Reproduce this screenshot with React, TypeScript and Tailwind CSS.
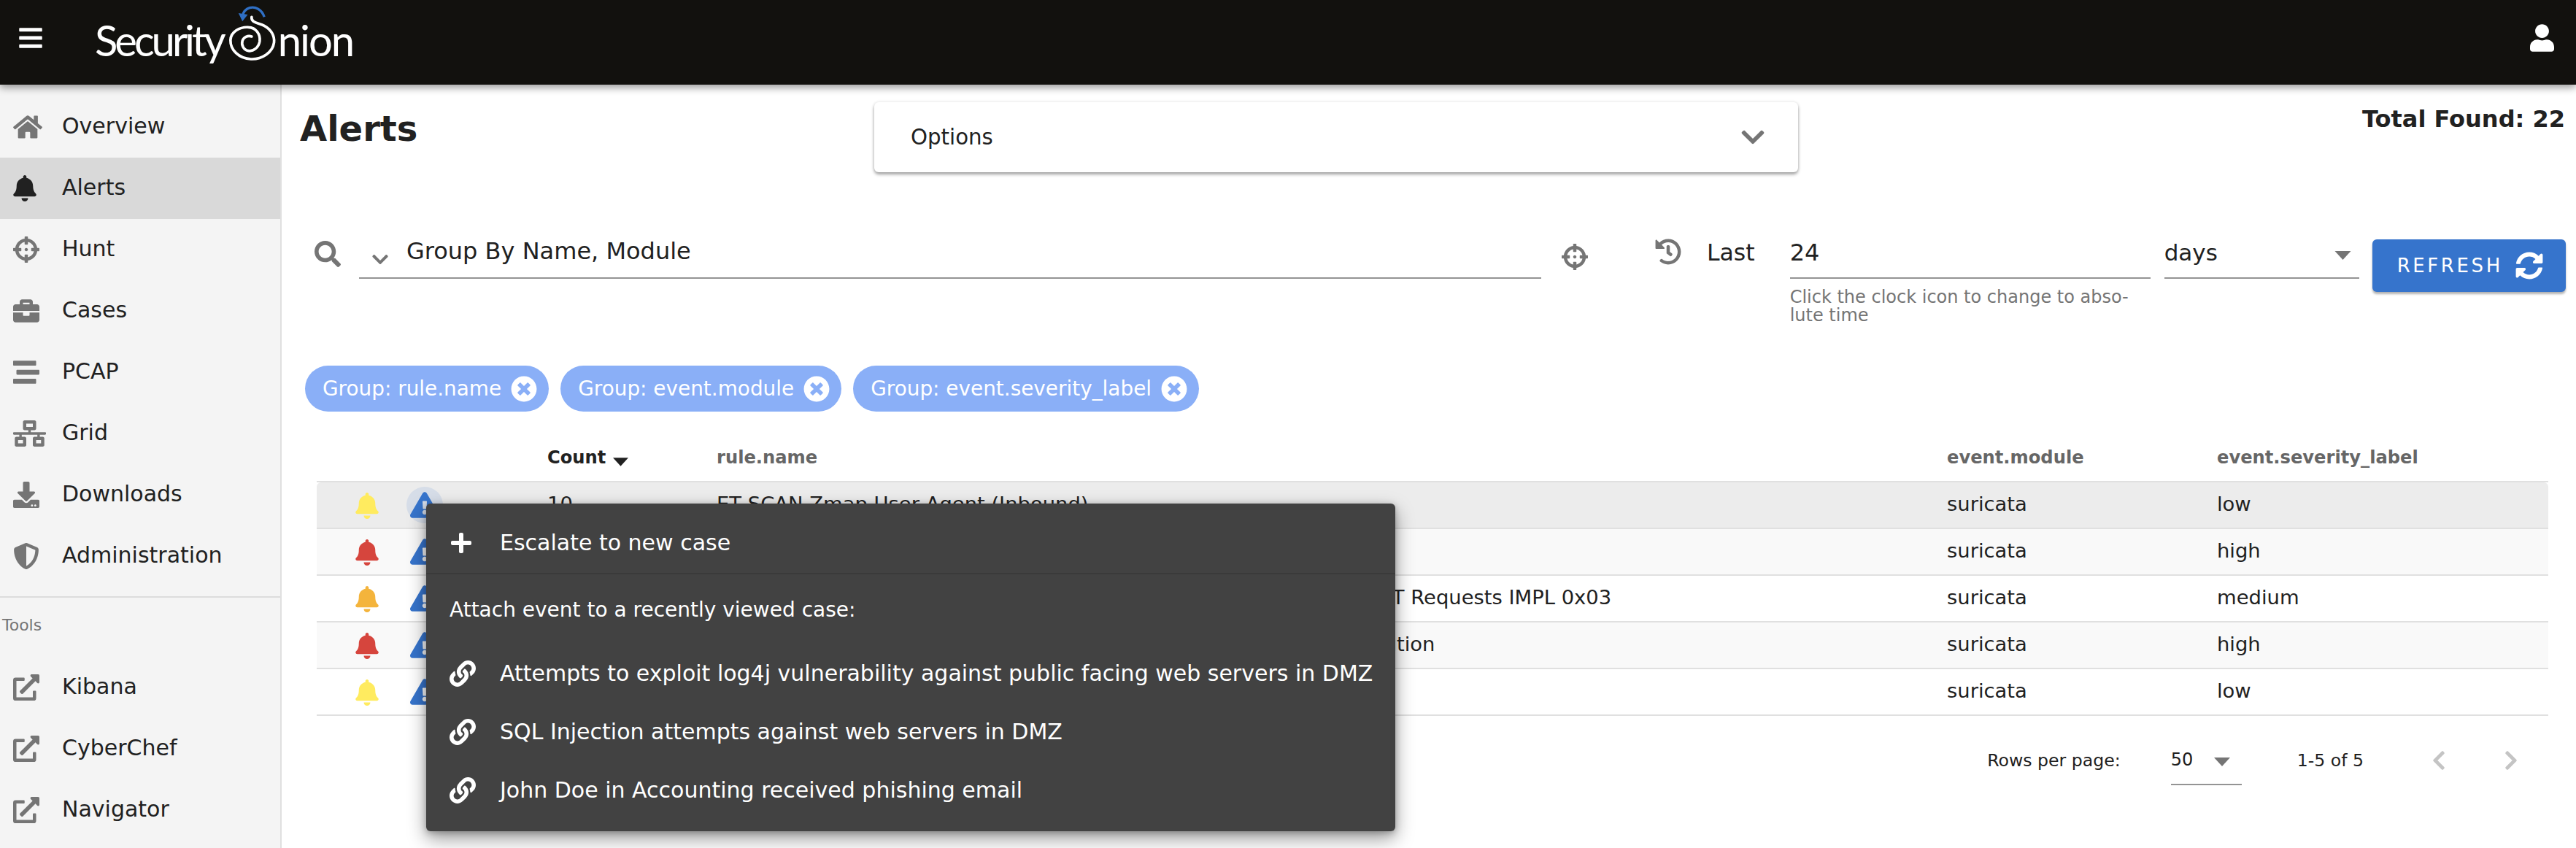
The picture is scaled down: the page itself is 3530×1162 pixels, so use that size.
import React from "react";
import {
  FaBars, FaUser, FaHome, FaBell, FaCrosshairs, FaBriefcase, FaStream, FaNetworkWired, FaDownload,
  FaShieldAlt, FaExternalLinkAlt, FaSearch, FaChevronDown, FaChevronLeft, FaChevronRight, FaHistory,
  FaSyncAlt, FaTimesCircle, FaExclamationTriangle, FaPlus, FaLink,
} from "react-icons/fa";

const nav = [
  { label: "Overview", icon: <FaHome className="w-[40px] h-[36px] text-[#757575]" /> },
  { label: "Alerts", icon: <FaBell className="w-[32px] h-[36px] text-[#212121]" />, active: true },
  { label: "Hunt", icon: <FaCrosshairs className="w-[36px] h-[36px] text-[#757575]" /> },
  { label: "Cases", icon: <FaBriefcase className="w-[36px] h-[36px] text-[#757575]" /> },
  { label: "PCAP", icon: <FaStream className="w-[36px] h-[36px] text-[#757575]" /> },
  { label: "Grid", icon: <FaNetworkWired className="w-[45px] h-[36px] text-[#757575]" /> },
  { label: "Downloads", icon: <FaDownload className="w-[36px] h-[36px] text-[#757575]" /> },
  { label: "Administration", icon: <FaShieldAlt className="w-[36px] h-[36px] text-[#757575]" /> },
];
const tools = ["Kibana", "CyberChef", "Navigator"];

const rows = [
  { bell: "text-[#ffeb5f]", count: "10", rule: "ET SCAN Zmap User Agent (Inbound)", sev: "low", bg: "bg-[#ececec] rounded-t-[6px]", hover: true },
  { bell: "text-[#d6453d]", count: "4", rule: "ET EXPLOIT Apache log4j RCE Attempt", sev: "high", bg: "bg-[#f9f9f9]" },
  { bell: "text-[#f4b43c]", count: "3", rule: "ET DOS Possible NTP DDoS Inbound Frequently Un-Authed MON_LIST Requests IMPL 0x03", sev: "medium", bg: "bg-white" },
  { bell: "text-[#d6453d]", count: "3", rule: "ET WEB_SERVER Possible SQL Injection Attempt Remote Cmd Execution", sev: "high", bg: "bg-[#f9f9f9]" },
  { bell: "text-[#ffeb5f]", count: "2", rule: "ET SCAN Suspicious inbound to MySQL port 3306", sev: "low", bg: "bg-white" },
];

const cases = [
  "Attempts to exploit log4j vulnerability against public facing web servers in DMZ",
  "SQL Injection attempts against web servers in DMZ",
  "John Doe in Accounting received phishing email",
];

const gridCols = "grid grid-cols-[128px_188px_232px_1686px_370px_1fr] items-center";

function Triangle({ className }: { className: string }) {
  return (
    <svg viewBox="0 0 22 12" className={className}>
      <path d="M0 0H22L11 12Z" fill="currentColor" />
    </svg>
  );
}

function Swirl() {
  return (
    <svg viewBox="610 18 200 234" className="w-[67px] h-[78px] mt-[6px] ml-[6px] mr-[2px] shrink-0" fill="none">
      <path d="M760 70C750 38 722 26 700 32C684 37 674 48 670 66" stroke="#2f6fc4" strokeWidth="10" />
      <path d="M654 54L692 60L670 88Z" fill="#2f6fc4" />
      <path
        d="M708 70C706 96 738 94 760 106C790 122 803 150 800 175C795 216 750 245 705 243C655 240 620 205 621 165C622 130 660 110 695 112C725 113 745 140 741 170C737 195 715 212 695 209C675 206 665 185 670 168C675 152 692 145 708 150"
        stroke="white"
        strokeWidth="11"
        strokeLinecap="round"
      />
    </svg>
  );
}

export default function App() {
  return (
    <div className="relative w-[3530px] h-[1162px] overflow-hidden bg-white text-[#212121] font-['DejaVu_Sans',sans-serif]">
      <header className="relative z-10 h-[116px] bg-[#12110e] shadow-[0_4px_10px_rgba(0,0,0,0.4)] flex items-start">
        <FaBars className="w-[32px] h-[36px] mt-[34px] ml-[26px] text-white" />
        <div className="flex items-start ml-[72px] text-white font-['Lato',sans-serif] font-normal text-[58px] leading-[60px]">
          <span className="mt-[25px] tracking-[-4px]">Security</span>
          <Swirl />
          <span className="mt-[25px] tracking-[-2px]">nion</span>
        </div>
        <FaUser className="w-[33px] h-[38px] mt-[33px] ml-auto mr-[30px] text-white" />
      </header>

      <div className="flex h-[1046px]">
        <aside className="w-[386px] shrink-0 bg-[#f4f4f4] border-r-2 border-[#e0e0e0] pt-[16px]">
          {nav.map((n) => (
            <div key={n.label} className={`h-[84px] flex items-center pl-[18px] ${n.active ? "bg-[#d9d9d9]" : ""}`}>
              <div className="w-[67px] shrink-0">{n.icon}</div>
              <span className="text-[30px] leading-[40px] -mt-[2px]">{n.label}</span>
            </div>
          ))}
          <div className="mt-[13px] h-[2px] bg-[#dcdcdc]" />
          <div className="mt-[26px] pl-[3px] text-[22px] leading-[24px] text-[#757575]">Tools</div>
          <div className="mt-[31px]">
            {tools.map((t) => (
              <div key={t} className="h-[84px] flex items-center pl-[18px]">
                <div className="w-[67px] shrink-0">
                  <FaExternalLinkAlt className="w-[36px] h-[36px] text-[#757575]" />
                </div>
                <span className="text-[30px] leading-[40px] -mt-[3px]">{t}</span>
              </div>
            ))}
          </div>
        </aside>

        <main className="flex-1 min-w-0">
          <div className="grid grid-cols-[787px_1266px_1fr] pt-[24px] pl-[25px] pr-[15px]">
            <h1 className="text-[48px] leading-[56px] font-bold mt-[8px]">Alerts</h1>
            <div className="h-[96px] bg-white rounded-[6px] shadow-[0_3px_4px_rgba(0,0,0,0.35),0_0_4px_rgba(0,0,0,0.1)] flex items-center justify-between pl-[50px] pr-[46px]">
              <span className="text-[29.25px] leading-[40px]">Options</span>
              <FaChevronDown className="w-[32px] h-[36px] text-[#757575]" />
            </div>
            <div className="text-right text-[32px] leading-[40px] font-bold mt-[3px]">Total Found: 22</div>
          </div>

          <div className="flex items-start mt-[84px] pl-[45px]">
            <FaSearch className="w-[36px] h-[36px] mt-[10px] text-[#757575] shrink-0" />
            <div className="w-[1620px] h-[62px] ml-[25px] border-b-2 border-[#949494] flex items-start shrink-0">
              <FaChevronDown className="w-[22px] h-[25px] mt-[23px] ml-[18px] text-[#757575]" />
              <span className="ml-[25px] mt-[4px] text-[32px] leading-[40px]">Group By Name, Module</span>
            </div>
            <FaCrosshairs className="w-[36px] h-[36px] mt-[14px] ml-[28px] text-[#757575] shrink-0" />
            <FaHistory className="w-[36px] h-[36px] mt-[7px] ml-[92px] text-[#757575] shrink-0" />
            <span className="ml-[35px] mt-[6px] text-[31.5px] leading-[40px]">Last</span>
            <div className="w-[494px] ml-[48px] shrink-0">
              <div className="h-[62px] border-b-2 border-[#949494] pt-[6px] text-[32px] leading-[40px]">24</div>
              <p className="mt-[13px] text-[24px] leading-[25px] text-[#757575] w-[490px]">
                Click the clock icon to change to abso-
                <br />
                lute time
              </p>
            </div>
            <div className="w-[267px] h-[62px] ml-[19px] border-b-2 border-[#949494] flex items-start justify-between pt-[6px] pr-[11px] shrink-0">
              <span className="text-[31px] leading-[40px]">days</span>
              <Triangle className="w-[23px] h-[12px] mt-[18px] text-[#757575]" />
            </div>
            <button className="w-[265px] h-[72px] mt-[8px] ml-[18px] shrink-0 rounded-[6px] bg-[#3674cc] text-white shadow-[0_3px_3px_rgba(0,0,0,0.3)] flex items-center pl-[34px]">
              <span className="text-[26px] leading-[32px] tracking-[3.6px]">REFRESH</span>
              <FaSyncAlt className="w-[38px] h-[38px] ml-[17px]" />
            </button>
          </div>

          <div className="flex gap-[16px] mt-[56px] pl-[32px] text-white">
            {["Group: rule.name", "Group: event.module", "Group: event.severity_label"].map((c) => (
              <div key={c} className="h-[63px] rounded-full bg-[#8aaff7] flex items-center pl-[24px] pr-[16px] text-[27.9px] leading-[36px]">
                <span>{c}</span>
                <FaTimesCircle className="w-[36px] h-[36px] ml-[13px]" />
              </div>
            ))}
          </div>

          <div className="ml-[48px] mr-[38px] mt-[27px]">
            <div className={`${gridCols} h-[70px] pt-[4px] border-b-2 border-[#e0e0e0] text-[24.2px] leading-[32px] font-bold text-[#666666]`}>
              <span />
              <span />
              <span className="flex items-center text-[#212121]">
                Count
                <Triangle className="w-[21px] h-[12px] ml-[10px] mt-[12px] text-[#212121]" />
              </span>
              <span>rule.name</span>
              <span>event.module</span>
              <span>event.severity_label</span>
            </div>
            {rows.map((r, i) => (
              <div key={i} className={`${gridCols} h-[64px] border-b-2 border-[#e0e0e0] text-[27.4px] leading-[36px] ${r.bg}`}>
                <span className="pl-[53px] pt-[2px]">
                  <FaBell className={`w-[32px] h-[36px] ${r.bell}`} />
                </span>
                <span className="relative">
                  {r.hover && <span className="absolute left-[0px] top-[-2px] w-[40px] h-[40px] rounded-full bg-[rgba(54,116,204,0.12)] scale-125" />}
                  <FaExclamationTriangle className="relative w-[40px] h-[36px] text-[#3674cc]" />
                </span>
                <span className="-mt-[2px]">{r.count}</span>
                <span className="-mt-[2px] whitespace-nowrap">{r.rule}</span>
                <span className="-mt-[2px]">suricata</span>
                <span className="-mt-[2px]">{r.sev}</span>
              </div>
            ))}
            <div className="flex items-center justify-end mt-[26px] mr-[41px] h-[69px] text-[23.6px] leading-[32px]">
              <span>Rows per page:</span>
              <div className="w-[97px] h-[69px] ml-[69px] border-b-2 border-[#949494] flex items-center">
                <span className="text-[24px]">50</span>
                <Triangle className="w-[22px] h-[12px] ml-[29px] mt-[6px] text-[#757575]" />
              </div>
              <span className="ml-[76px]">1-5 of 5</span>
              <FaChevronLeft className="w-[20px] h-[30px] ml-[93px] text-[#c4c4c4]" />
              <FaChevronRight className="w-[20px] h-[30px] ml-[79px] text-[#c4c4c4]" />
            </div>
          </div>
        </main>
      </div>

      <div className="absolute z-20 left-[584px] top-[690px] w-[1328px] h-[449px] rounded-[6px] bg-[#424242] text-white shadow-[0_10px_26px_rgba(0,0,0,0.4),0_2px_8px_rgba(0,0,0,0.25)]">
        <div className="h-[97px] border-b-2 border-[#3a3a3a] flex items-center pl-[32px] pt-[12px] text-[30px] leading-[40px]">
          <FaPlus className="w-[32px] h-[32px] mr-[37px]" />
          <span>Escalate to new case</span>
        </div>
        <div className="h-[94px] flex items-center pl-[32px] pt-[4px] text-[28px] leading-[36px]">Attach event to a recently viewed case:</div>
        {cases.map((c) => (
          <div key={c} className="h-[80px] flex items-center pl-[32px] pt-[4px] text-[30px] leading-[40px]">
            <FaLink className="w-[36px] h-[36px] mr-[33px]" />
            <span>{c}</span>
          </div>
        ))}
      </div>
    </div>
  );
}
